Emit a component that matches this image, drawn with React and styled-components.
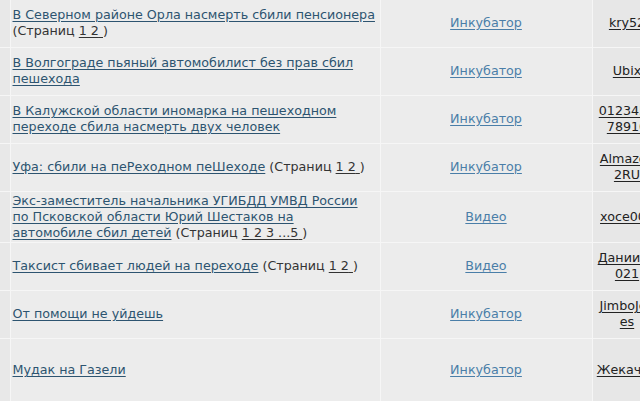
import React from 'react';
import styled, { createGlobalStyle } from 'styled-components';

const GlobalStyle = createGlobalStyle`
  body {
    margin: 0;
    background: #ebebeb;
    overflow: hidden;
  }
`;

const topics = [
  { title: 'В Северном районе Орла насмерть сбили пенсионера', pages: ['1', '2'], forum: 'Инкубатор', author: 'kry52' },
  { title: 'В Волгограде пьяный автомобилист без прав сбил пешехода', forum: 'Инкубатор', author: 'Ubix' },
  { title: 'В Калужской области иномарка на пешеходном переходе сбила насмерть двух человек', forum: 'Инкубатор', author: '012345678910' },
  { title: 'Уфа: сбили на пеРеходном пеШеходе', pages: ['1', '2'], forum: 'Инкубатор', author: 'Almazov2RU' },
  { title: 'Экс-заместитель начальника УГИБДД УМВД России по Псковской области Юрий Шестаков на автомобиле сбил детей', pages: ['1', '2', '3', '...5'], forum: 'Видео', author: 'xoce007' },
  { title: 'Таксист сбивает людей на переходе', pages: ['1', '2'], forum: 'Видео', author: 'Даниил2021' },
  { title: 'От помощи не уйдешь', forum: 'Инкубатор', author: 'JimboJones' },
  { title: 'Мудак на Газели', forum: 'Инкубатор', author: 'Жекачан', tall: true },
];

function App() {
  return (
    <>
      <GlobalStyle />
      <Table>
        <colgroup>
          <col style={{ width: 10 }} />
          <col style={{ width: 370 }} />
          <col style={{ width: 212 }} />
          <col style={{ width: 70 }} />
        </colgroup>
        <tbody>
          {topics.map((t, i) => (
            <Row key={i} $tall={t.tall}>
              <IconCell />
              <TitleCell>
                <TopicLink href="#">{t.title}</TopicLink>
                {t.pages && (
                  <>
                    {' '}
                    <Pages>
                      (Страниц{' '}
                      <PageLink href="#">{t.pages.join(' ')} </PageLink>)
                    </Pages>
                  </>
                )}
              </TitleCell>
              <ForumCell>
                <ForumLink href="#">{t.forum}</ForumLink>
              </ForumCell>
              <AuthorCell>
                <AuthorLink href="#">{t.author}</AuthorLink>
              </AuthorCell>
            </Row>
          ))}
        </tbody>
      </Table>
    </>
  );
}

export default App;

const Table = styled.table`
  border-collapse: collapse;
  table-layout: fixed;
  width: 662px;
  margin-top: -1px;
  font: 12.7px/16px "DejaVu Sans", Verdana, sans-serif;
  color: #333;
`;

const Row = styled.tr`
  height: ${(p) => (p.$tall ? '64px' : '48px')};

  td {
    border: 1px solid #f6f6f6;
    border-top: 0;
    padding: 1px 2px;
    vertical-align: middle;
  }
`;

const IconCell = styled.td`
  background: #e8e8e8;
  border-left: 0 !important;
`;

const TitleCell = styled.td`
  background: #ececec;
  && {
    padding-right: 3px;
  }
`;

const ForumCell = styled.td`
  background: #ececec;
  text-align: center;
`;

const AuthorCell = styled.td`
  background: #e7e7e7;
  text-align: center;
  word-break: break-all;
  && {
    padding: 1px 4px;
  }
`;

const TopicLink = styled.a`
  color: #2d5470;
  text-decoration: underline;
  text-underline-offset: 2px;
`;

const Pages = styled.span`
  color: #333;
`;

const PageLink = styled.a`
  color: #333;
  text-decoration: underline;
  text-underline-offset: 2px;
`;

const ForumLink = styled.a`
  color: #4a7ea8;
  text-decoration: underline;
  text-underline-offset: 2px;
`;

const AuthorLink = styled.a`
  color: #222;
  text-decoration: underline;
  text-underline-offset: 2px;
`;
